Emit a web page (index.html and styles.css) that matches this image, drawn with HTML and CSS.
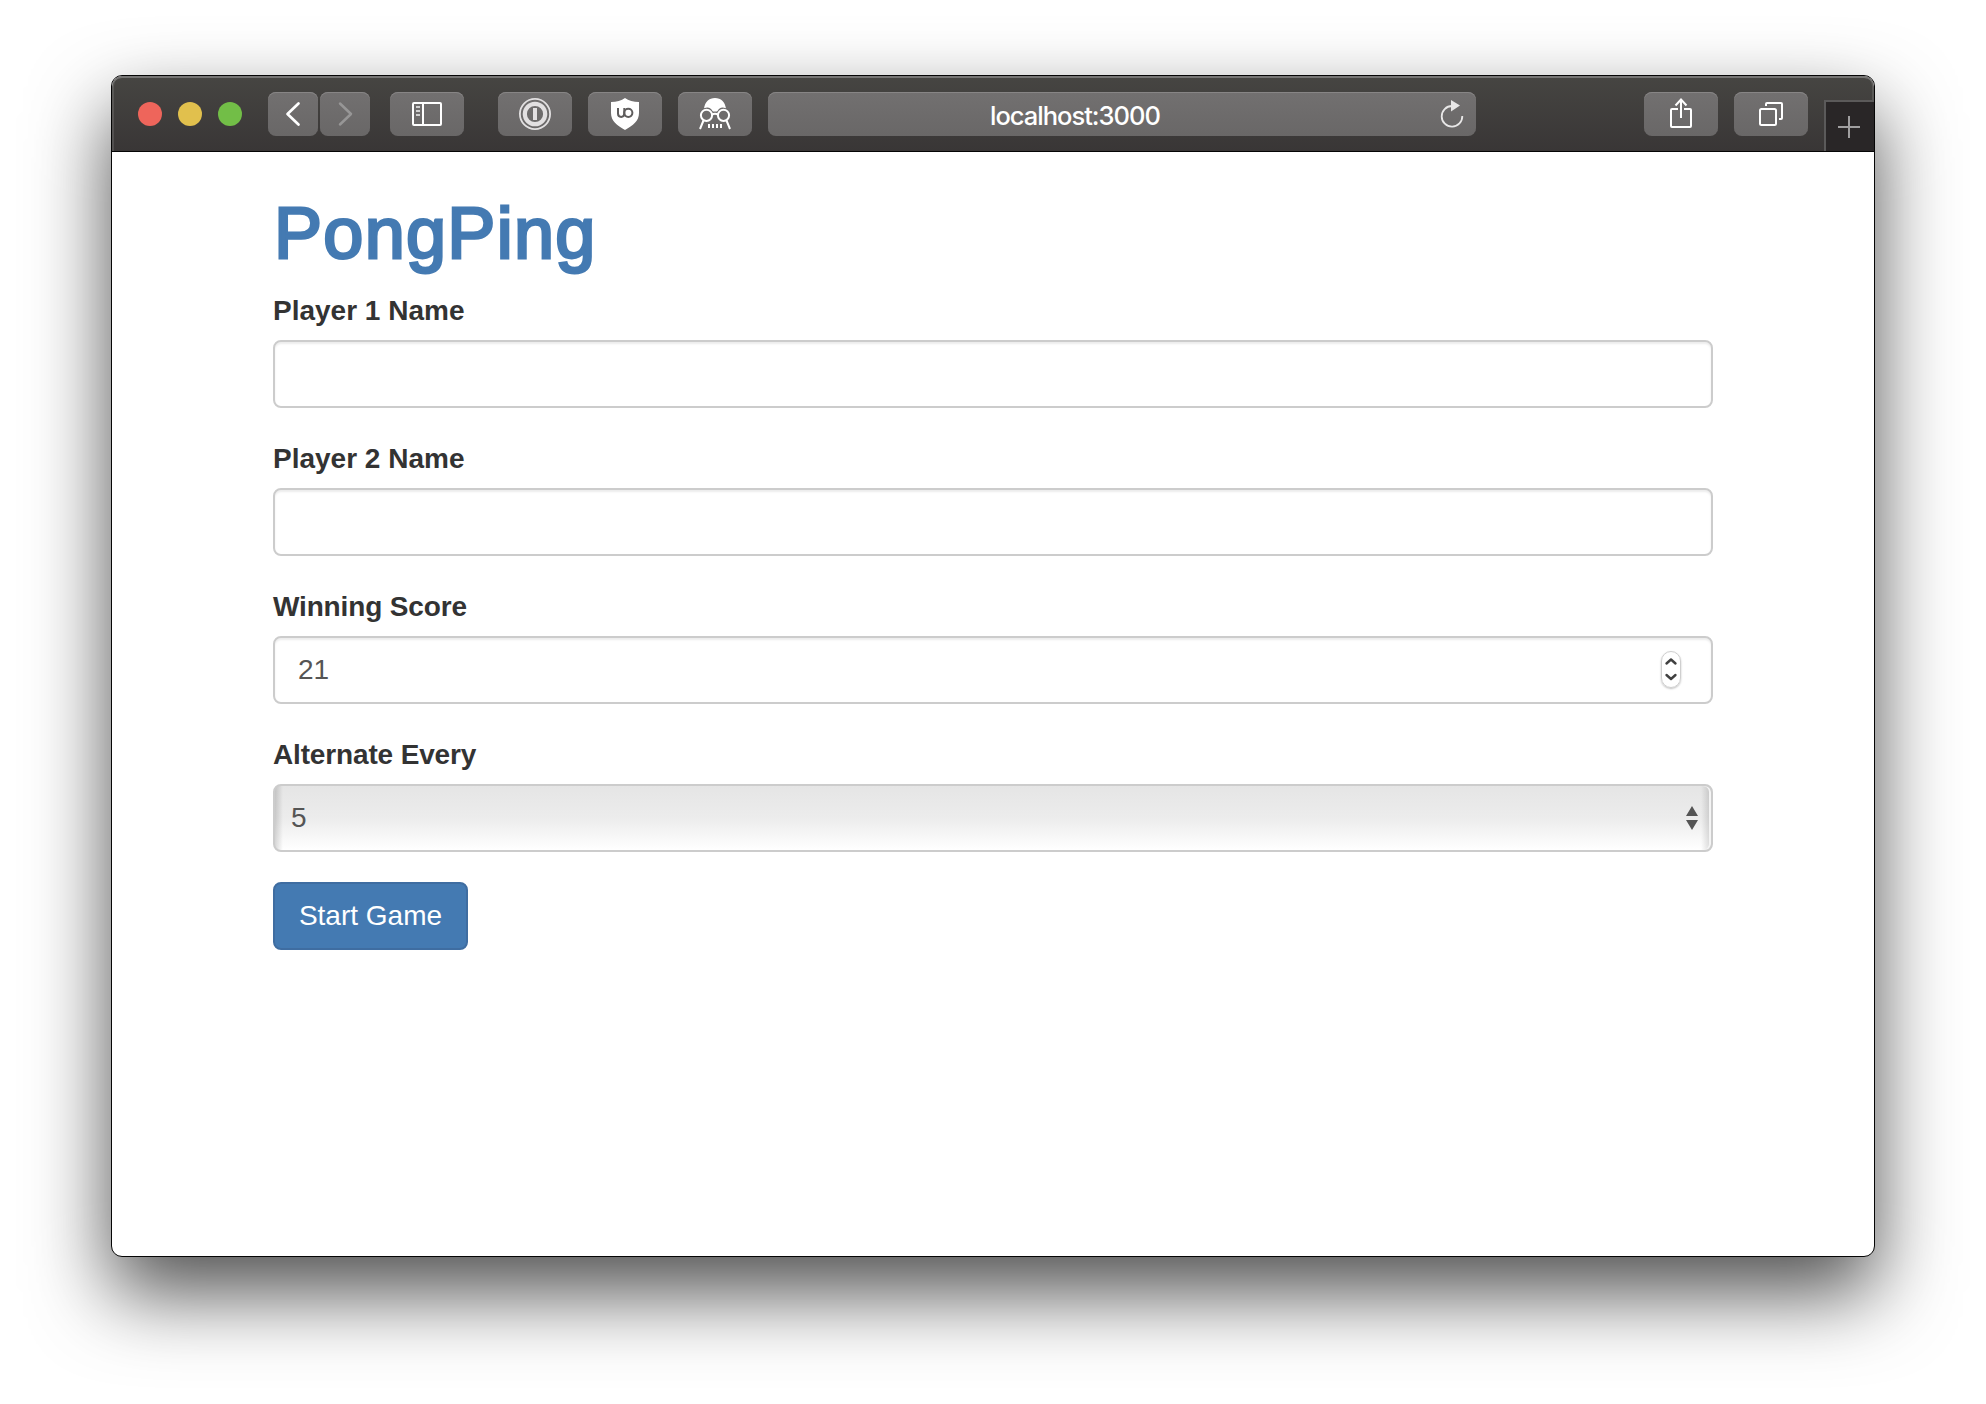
FILE: index.html
```html
<!DOCTYPE html>
<html lang="en">
<head>
<meta charset="utf-8">
<title>PongPing</title>
<link rel="stylesheet" href="styles.css">
</head>
<body>
<div class="window">
  <header class="toolbar">
    <div class="lights">
      <span class="light light-close"></span>
      <span class="light light-min"></span>
      <span class="light light-max"></span>
    </div>
    <div class="nav">
      <button class="tool tool-nav" aria-label="Back"><svg width="50" height="44" fill="none" stroke="#fff" stroke-width="2.7" stroke-linecap="round" stroke-linejoin="round"><path d="M30.5 11.5 19.5 22l11 10.5"/></svg></button>
      <button class="tool tool-nav" aria-label="Forward"><svg width="50" height="44" fill="none" stroke="#979696" stroke-width="2.5" stroke-linecap="round" stroke-linejoin="round"><path d="M20 11.5 31 22 20 32.5"/></svg></button>
    </div>
    <button class="tool tool-sidebar" aria-label="Sidebar"><svg width="74" height="44" fill="none" stroke="#fff" stroke-width="2"><rect x="23" y="11" width="28" height="22" rx="1"/><path d="M33 11v22"/><path d="M26 15h4M26 19h4M26 23h4" stroke="#d0d0d0"/></svg></button>
    <div class="extensions">
      <button class="tool" aria-label="Passwords"><svg width="74" height="44" fill="none" stroke="#e2e0e1"><circle cx="37" cy="22" r="15.1" stroke-width="1.8"/><circle cx="37" cy="22" r="10.2" stroke-width="4.2"/><path d="M37 16v12" stroke-width="4"/></svg></button>
      <button class="tool" aria-label="Content blocker"><svg width="74" height="44"><path fill="#fff" d="M37 6c3.5 2.800 8.500 4 14 4v11c0 8-6 12.500-14 17-8-4.500-14-9-14-17V10c5.500 0 10.500-1.200 14-4z"/><path d="M30 16v5.500c0 4.500 6.300 4.500 6.300 0V16" fill="none" stroke="#5f5d5d" stroke-width="2"/><circle cx="40.300" cy="20.800" r="4.100" fill="none" stroke="#5f5d5d" stroke-width="2"/></svg></button>
      <button class="tool" aria-label="Privacy"><svg width="74" height="44" fill="none" stroke="#fff" stroke-width="2"><path d="M26 16.500C27 10 31 6 37 6s10 4 11 10.500c-4-2-7-.5-8.500 3h-5c-1.500-3.500-4.500-5-8.500-3z" fill="#fff" stroke="none"/><circle cx="28.500" cy="23.300" r="7.400" fill="#6e6c6c" stroke="none"/><circle cx="45.500" cy="23.300" r="7.400" fill="#6e6c6c" stroke="none"/><circle cx="28.500" cy="23.300" r="5.600"/><circle cx="45.500" cy="23.300" r="5.600"/><path d="M34 22.500q3-1.500 6 0M25.500 28.500 22 37M48.500 28.500 52 37M31 32v4M35 32v4M39 32v4M43 32v4"/></svg></button>
    </div>
    <div class="address"><span class="url">localhost:3000</span><svg class="reload" width="26" height="30" fill="none" stroke="#e8e7e7" stroke-width="1.8"><path d="M13 7A10.300 10.300 0 1 0 23.300 17"/><path d="M12 1v11.500l9-6z" fill="#e8e7e7" stroke="none"/></svg></div>
    <div class="actions">
      <button class="tool" aria-label="Share"><svg width="74" height="44" fill="none" stroke="#fff" stroke-width="2"><path d="M34 17h-6q-1 0-1 1v16q0 1 1 1h18q1 0 1-1V18q0-1-1-1h-6M37 26V8M31.500 13.500 37 7.500l5.500 6"/></svg></button>
      <button class="tool" aria-label="Show tabs"><svg width="74" height="44" fill="none" stroke="#fff" stroke-width="2"><rect x="26" y="17" width="16" height="16" rx="1.5"/><path d="M32 14v-2q0-1 1-1h14q1 0 1 1v14q0 1-1 1h-2"/></svg></button>
    </div>
    <button class="new-tab" aria-label="New tab"><svg width="48" height="48" stroke="#a09fa0" stroke-width="2"><path d="M23 13v22M12 24h22"/></svg></button>
  </header>
  <main class="page">
    <h1 class="title">PongPing</h1>
    <form class="form">
      <div class="group">
        <label class="label" for="p1">Player 1 Name</label>
        <input class="control" id="p1" type="text">
      </div>
      <div class="group">
        <label class="label" for="p2">Player 2 Name</label>
        <input class="control" id="p2" type="text">
      </div>
      <div class="group">
        <label class="label label-tight">Winning Score</label>
        <div class="control control-number"><span>21</span><span class="stepper"><svg width="18" height="34" fill="none" stroke="#404040" stroke-width="2.4" stroke-linecap="round" stroke-linejoin="round"><path d="M4.500 11.500 9 7.500l4.500 4M4.500 23 9 27l4.500-4"/></svg></span></div>
      </div>
      <div class="group">
        <label class="label label-tight">Alternate Every</label>
        <div class="control control-select"><span>5</span><svg width="14" height="28" fill="#555"><path d="M1 12 7 2l6 10zM1 16h12L7 26z"/></svg></div>
      </div>
      <button class="submit" type="button">Start Game</button>
    </form>
  </main>
</div>
</body>
</html>
```
FILE: styles.css
```css
* { box-sizing: border-box; }
html, body { height: 100%; }
body {
  margin: 0;
  padding: 75px 111px 147px;
  background: #fff;
  overflow: hidden;
  font-family: "Liberation Sans", Arial, sans-serif;
}
button { padding: 0; border: 0; font: inherit; }
svg { display: block; flex: none; }

.window {
  width: 1764px;
  height: 1182px;
  border: 1px solid #050505;
  border-radius: 11px;
  overflow: hidden;
  background: #fff;
  box-shadow: 0 36px 80px rgba(0, 0, 0, .69);
}

.toolbar {
  display: flex;
  height: 76px;
  padding: 16px 0 0 26px;
  background: linear-gradient(#464542, #393636);
  border-bottom: 1px solid #050505;
  border-radius: 10px 10px 0 0;
  box-shadow: inset 0 2px 0 #767574, inset 2px 0 0 rgba(255, 255, 255, .12), inset -2px 0 0 rgba(255, 255, 255, .12);
}
.lights { display: flex; gap: 16px; padding-top: 10px; margin-right: 26px; }
.light { width: 24px; height: 24px; border-radius: 50%; }
.light-close { background: #ee655b; }
.light-min { background: #e1c04d; }
.light-max { background: #72be47; }
.nav { display: flex; gap: 2px; margin-right: 20px; }
.tool, .address {
  height: 44px;
  border-radius: 8px;
  background: linear-gradient(#727070, #696767);
  box-shadow: inset 0 1px 0 #878585;
}
.tool { width: 74px; flex: none; }
.tool-nav { width: 50px; }
.tool-sidebar { margin-right: 34px; }
.extensions, .actions { display: flex; gap: 16px; }
.address {
  display: flex;
  align-items: center;
  width: 708px;
  margin: 0 168px 0 16px;
  padding: 0 11px 0 222px;
  color: #fff;
}
.url {
  flex: 1;
  font: 500 25.5px/44px Inter, sans-serif;
  letter-spacing: -1px;
  padding-top: 3px;
}
.reload { margin-top: -1px; }
.new-tab {
  width: 50px;
  height: 51px;
  margin: 8px 0 0 16px;
  background: #292627;
  border-left: 2px solid #5b5a5a;
  border-top: 2px solid #5b5a5a;
}

.page { padding: 42px 161px 0; color: #333; }
.title {
  margin: 0 0 17px;
  font-size: 72px;
  font-weight: 400;
  line-height: 79px;
  letter-spacing: 1.3px;
  padding-left: 1px;
  color: #447ab2;
  -webkit-text-stroke: 2.8px #447ab2;
}
.form { display: flex; flex-direction: column; align-items: flex-start; font-size: 28px; }
.group { width: 1440px; margin-bottom: 30px; }
.label { display: block; height: 41px; margin-bottom: 9px; line-height: 41px; font-weight: 700; }
.label-tight { letter-spacing: -.15px; }
.control {
  display: flex;
  align-items: center;
  justify-content: space-between;
  width: 1440px;
  height: 68px;
  padding: 0 24px;
  border: 2px solid #ccc;
  border-radius: 8px;
  background: #fff;
  box-shadow: inset 0 2px 2px rgba(0, 0, 0, .075);
  color: #555;
  font: inherit;
}
.control-number { padding: 0 30px 0 23px; }
.stepper {
  width: 20px;
  height: 37px;
  margin-top: -2px;
  border: 1px solid #cfcfcf;
  border-radius: 10px;
  box-shadow: 0 1px 2px rgba(0, 0, 0, .25);
}
.control-select {
  padding: 0 12px 0 16px;
  background:
    linear-gradient(90deg, rgba(0, 0, 0, .15), transparent 8px),
    linear-gradient(270deg, rgba(0, 0, 0, .15), transparent 10px),
    linear-gradient(#e5e5e5, #ececec 50%, #fff);
  box-shadow: inset -2px 0 0 #f4f4f4;
}
.submit {
  width: 195px;
  height: 68px;
  border: 2px solid #3f6da1;
  border-radius: 8px;
  background: #447ab2;
  color: #fff;
}
```
